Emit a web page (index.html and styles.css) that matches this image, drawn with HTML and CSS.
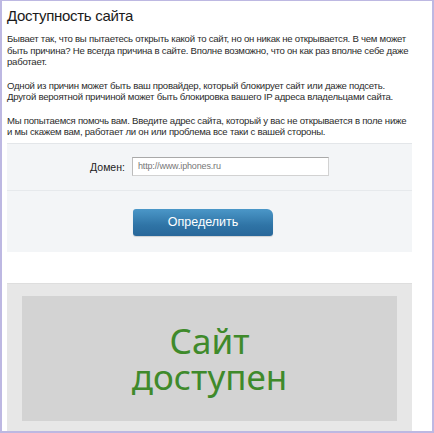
FILE: index.html
```html
<!DOCTYPE html>
<html lang="ru">
<head>
<meta charset="utf-8">
<link rel="stylesheet" href="styles.css">
</head>
<body>
<div class="frame">
  <div class="content">
    <h1 class="title">Доступность сайта</h1>
    <p class="text">Бывает так, что вы пытаетесь открыть какой то сайт, но он никак не открывается. В чем может<br>быть причина? Не всегда причина в сайте. Вполне возможно, что он как раз вполне себе даже<br>работает.</p>
    <p class="text">Одной из причин может быть ваш провайдер, который блокирует сайт или даже подсеть.<br>Другой вероятной причиной может быть блокировка вашего IP адреса владельцами сайта.</p>
    <p class="text">Мы попытаемся помочь вам. Введите адрес сайта, который у вас не открывается в поле ниже<br>и мы скажем вам, работает ли он или проблема все таки с вашей стороны.</p>
    <div class="panel">
      <div class="row row-field">
        <label class="label">Домен:</label>
        <div class="input">http://www.iphones.ru</div>
      </div>
      <div class="row row-btn">
        <div class="button">Определить</div>
      </div>
    </div>
    <div class="result">
      <div class="result-inner">
        <div class="result-text">Сайт<br>доступен</div>
      </div>
    </div>
  </div>
</div>
</body>
</html>
```
FILE: styles.css
```css
html, body {
  margin: 0;
  padding: 0;
  background: #ffffff;
}
.frame {
  width: 434px;
  height: 433px;
  box-sizing: border-box;
  border: 2px solid #bdb8e2;
  border-top-width: 1px;
  overflow: hidden;
  background: #fff;
}
.content {
  padding: 0 20px 0 5px;
  font-family: "Liberation Sans", Arial, sans-serif;
  color: #2b2b2b;
}
.title {
  margin: 0;
  padding-top: 5px;
  font-size: 15px;
  letter-spacing: -0.3px;
  line-height: 19px;
  font-weight: normal;
  color: #1a1a1a;
}
.text {
  margin: 12px 0 0;
  font-size: 9.6px;
  letter-spacing: -0.25px;
  line-height: 11.5px;
  white-space: nowrap;
}
.text:first-of-type {
  margin-top: 8px;
}
.panel {
  margin-top: 5px;
  background: #f3f5f7;
  border-top: 1px solid #e3e6e9;
}
.row {
  display: flex;
  justify-content: center;
}
.row-field {
  height: 46px;
  align-items: center;
  gap: 7px;
  border-bottom: 1px solid #e6e9ec;
}
.label {
  font-size: 10.5px;
  color: #222;
}
.input {
  width: 190px;
  height: 17px;
  padding-left: 5px;
  background: #fff;
  border: 1px solid #d2d2d2;
  border-top-color: #a9a9a9;
  border-left-color: #bcbcbc;
  font-size: 9px;
  letter-spacing: -0.15px;
  line-height: 17px;
  color: #777;
}
.row-btn {
  height: 61px;
  padding-top: 18px;
  padding-right: 13px;
  box-sizing: border-box;
}
.button {
  width: 140px;
  height: 27px;
  border-radius: 3px 6px 3px 3px;
  background: linear-gradient(#4b97c8, #2f74a6 60%, #28679a);
  box-shadow: 0 1px 1px rgba(0,0,0,0.15);
  color: #fff;
  font-size: 12.5px;
  line-height: 27px;
  text-align: center;
}
.result {
  margin-top: 31px;
  background: #e7e7e7;
  border-top: 1px solid #dedede;
  padding: 12px 15px 10px;
  height: 160px;
}
.result-inner {
  background: #d3d3d3;
  height: 125px;
  display: flex;
  align-items: center;
  justify-content: center;
}
.result-text {
  font-family: "Noto Sans", "DejaVu Sans", sans-serif;
  font-size: 35px;
  line-height: 36px;
  color: #3f8a2b;
  text-align: center;
  padding-top: 2px;
}
```
